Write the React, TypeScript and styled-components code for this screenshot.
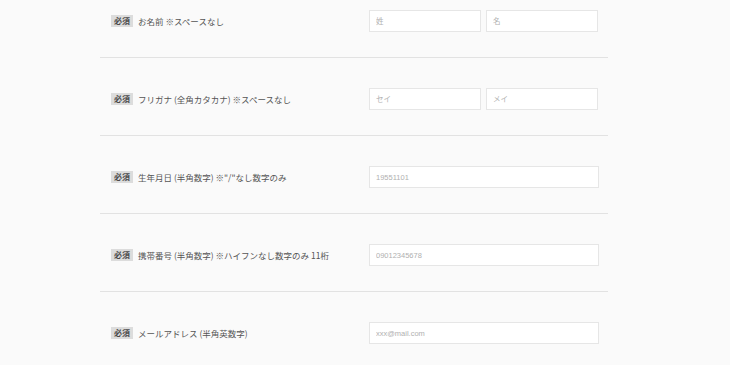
import styled, { createGlobalStyle } from 'styled-components';

const GlobalStyle = createGlobalStyle`
  html, body {
    margin: 0;
    padding: 0;
    background-color: #fafafa;
    font-family: "Noto Sans CJK JP", "Liberation Sans", sans-serif;
  }
`;

type Field = {
  label: string;
  placeholders: string[];
};

const fields: Field[] = [
  { label: 'お名前 ※スペースなし', placeholders: ['姓', '名'] },
  { label: 'フリガナ (全角カタカナ) ※スペースなし', placeholders: ['セイ', 'メイ'] },
  { label: '生年月日 (半角数字) ※"/"なし数字のみ', placeholders: ['19551101'] },
  { label: '携帯番号 (半角数字) ※ハイフンなし数字のみ 11桁', placeholders: ['09012345678'] },
  { label: 'メールアドレス (半角英数字)', placeholders: ['xxx@mail.com'] },
];

const App = () => {
  return (
    <>
      <GlobalStyle />
      <Form>
        {fields.map((field, i) => (
          <Row key={i} $first={i === 0} $last={i === fields.length - 1}>
            <Label>
              <Badge>必須</Badge>
              <LabelText>{field.label}</LabelText>
            </Label>
            <Inputs>
              {field.placeholders.map((p) => (
                <Input key={p} placeholder={p} $half={field.placeholders.length > 1} />
              ))}
            </Inputs>
          </Row>
        ))}
      </Form>
    </>
  );
};

const Form = styled.div`
  width: 508px;
  margin-left: 100px;
`;

const Row = styled.div<{ $first: boolean; $last: boolean }>`
  display: flex;
  align-items: center;
  padding: ${(p) => (p.$first ? '10px' : '30px')} 0 25px 11px;
  border-bottom: ${(p) => (p.$last ? 'none' : '1px solid #e2e2e2')};
`;

const Label = styled.div`
  display: flex;
  align-items: center;
  width: 258px;
  flex-shrink: 0;
`;

const Badge = styled.span`
  display: inline-block;
  background-color: #dcdcdc;
  color: #4a4a4a;
  font-size: 8px;
  font-weight: bold;
  line-height: 12px;
  padding: 0 3px;
  margin-right: 5px;
`;

const LabelText = styled.span`
  font-size: 8.5px;
  color: #555;
  white-space: nowrap;
`;

const Inputs = styled.div`
  display: flex;
  gap: 5px;
  width: 230px;
`;

const Input = styled.input<{ $half: boolean }>`
  box-sizing: border-box;
  width: ${(p) => (p.$half ? '112px' : '230px')};
  height: 22px;
  border: 1px solid #e6e6e6;
  background-color: #fff;
  padding: 0 6px;
  font-size: 7.5px;
  font-family: "Liberation Sans", "Noto Sans CJK JP", sans-serif;
  outline: none;

  &::placeholder {
    color: #b0b0b0;
  }
`;

export default App;
